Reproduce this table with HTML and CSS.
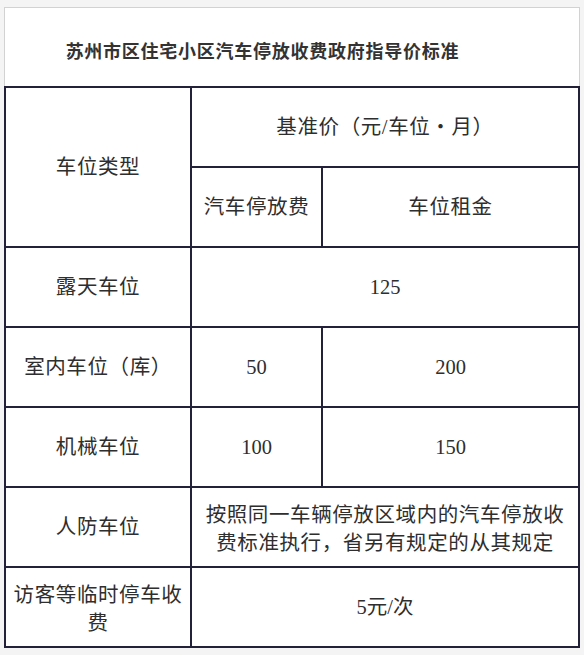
FILE: index.html
```html
<!DOCTYPE html>
<html lang="zh-CN">
<head>
<meta charset="utf-8">
<title>苏州市区住宅小区汽车停放收费政府指导价标准</title>
<link rel="stylesheet" href="styles.css">
</head>
<body>
<div class="page">
  <div class="title-box">
    <h1 class="title">苏州市区住宅小区汽车停放收费政府指导价标准</h1>
  </div>
  <table class="fee-table">
    <colgroup>
      <col class="col-type">
      <col class="col-park">
      <col class="col-rent">
    </colgroup>
    <tr>
      <td rowspan="2">车位类型</td>
      <td colspan="2">基准价（元/车位・月）</td>
    </tr>
    <tr>
      <td>汽车停放费</td>
      <td>车位租金</td>
    </tr>
    <tr>
      <td>露天车位</td>
      <td colspan="2" class="num">125</td>
    </tr>
    <tr>
      <td>室内车位（库）</td>
      <td class="num">50</td>
      <td class="num">200</td>
    </tr>
    <tr>
      <td>机械车位</td>
      <td class="num">100</td>
      <td class="num">150</td>
    </tr>
    <tr>
      <td>人防车位</td>
      <td colspan="2" class="multi">按照同一车辆停放区域内的汽车停放收费标准执行，省另有规定的从其规定</td>
    </tr>
    <tr>
      <td class="multi">访客等临时停车收费</td>
      <td colspan="2" class="num">5元/次</td>
    </tr>
  </table>
</div>
</body>
</html>
```
FILE: styles.css
```css
html, body {
  margin: 0;
  padding: 0;
  background: #f4f4f4;
}
.page {
  padding: 7px 4px 0 4px;
  width: 576px;
}
.title-box {
  background: #ffffff;
  border: 1px solid #d2d2d2;
  border-bottom: none;
  height: 79px;
  box-sizing: border-box;
  display: flex;
  align-items: center;
  justify-content: center;
  padding: 6px 59px 0 0;
}
.title {
  margin: 0;
  font-family: "Liberation Serif", "Noto Sans CJK SC", serif;
  font-size: 18px;
  font-weight: 700;
  letter-spacing: 0.75px;
  color: #333333;
}
.fee-table {
  width: 576px;
  border-collapse: collapse;
  table-layout: fixed;
  background: #ffffff;
  font-family: "Liberation Serif", "Noto Sans CJK SC", serif;
  font-size: 20.5px;
  color: #2e2e2e;
}
.col-type { width: 186px; }
.col-park { width: 131px; }
.fee-table tr {
  height: 80px;
}
.fee-table td {
  border: 2px solid #23213a;
  text-align: center;
  vertical-align: middle;
  padding: 0 6px;
  line-height: 28px;
  letter-spacing: 0.6px;
}
.fee-table td.num {
  font-size: 20.5px;
  letter-spacing: 0;
}
.fee-table td.multi {
  line-height: 28px;
  padding-top: 4px;
}
```
